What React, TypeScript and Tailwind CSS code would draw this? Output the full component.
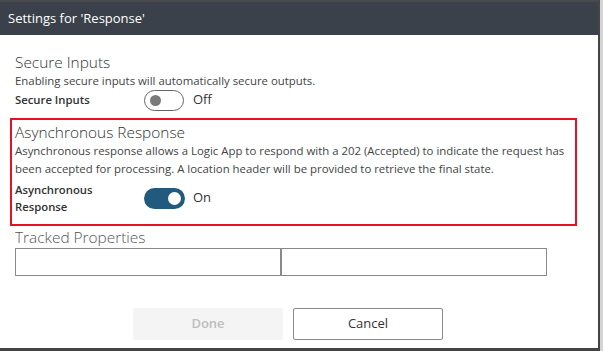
import { useState } from 'react';

function Toggle({ on, onChange }: { on: boolean; onChange: () => void }) {
  return (
    <button
      onClick={onChange}
      className={
        on
          ? 'w-[41px] h-[21px] rounded-full bg-[#215a7c] flex items-center justify-end pr-[4px]'
          : 'w-[40px] h-[21px] rounded-full border border-[#666] bg-white flex items-center justify-start pl-[5px]'
      }
    >
      <span className={on ? 'w-[13px] h-[13px] rounded-full bg-white' : 'w-[11px] h-[11px] rounded-full bg-[#7a7a7a]'} />
    </button>
  );
}

export default function App() {
  const [secure, setSecure] = useState(false);
  const [async, setAsync] = useState(true);

  return (
    <div className="w-[603px] h-[351px] flex bg-white text-[#333]" style={{ fontFamily: '"Open Sans", "Noto Sans", sans-serif' }}>
      <div className="w-[600px] h-full flex flex-col border-t-2 border-t-[#4a4a4a] border-r-2 border-r-[#444] border-b-[3px] border-b-[#444]">
        <div className="h-[33px] bg-[#3a414a] text-white text-[13px] pl-[8px] flex items-center">Settings for 'Response'</div>

        <div className="pl-[15px] pt-[18px]">
          <h2 className="text-[15.4px] leading-[20px] font-light">Secure Inputs</h2>
          <p className="text-[11.4px] leading-[16px] text-[#444]">Enabling secure inputs will automatically secure outputs.</p>
          <div className="flex items-center h-[22px]">
            <span className="w-[129px] text-[11.3px] font-semibold">Secure Inputs</span>
            <Toggle on={secure} onChange={() => setSecure(!secure)} />
            <span className="ml-[9px] text-[13px]">{secure ? 'On' : 'Off'}</span>
          </div>
        </div>

        <div className="ml-[10px] mt-[7px] w-[567px] h-[108px] border-2 border-[#e81123] pl-[3px] pt-[4px]">
          <h2 className="text-[15.4px] leading-[18px] font-light">Asynchronous Response</h2>
          <p className="text-[11.4px] leading-[18px] text-[#444]">
            Asynchronous response allows a Logic App to respond with a 202 (Accepted) to indicate the request has been accepted for processing. A location header will be provided to retrieve the final state.
          </p>
          <div className="flex items-center mt-[3px]">
            <span className="w-[129px] text-[11.3px] leading-[17px] font-semibold">
              Asynchronous
              <br />
              Response
            </span>
            <Toggle on={async} onChange={() => setAsync(!async)} />
            <span className="ml-[8px] text-[13px]">{async ? 'On' : 'Off'}</span>
          </div>
        </div>

        <div className="pl-[15px] pt-[2px]">
          <h2 className="text-[15.4px] leading-[20px] font-light text-[#555]">Tracked Properties</h2>
          <div className="flex">
            <input className="w-[266px] h-[28px] border border-[#8a8a8a] outline-none" />
            <input className="w-[266px] h-[28px] border border-[#8a8a8a] outline-none" />
          </div>
        </div>

        <div className="flex gap-[10px] pl-[133px] mt-[32px]">
          <button disabled className="w-[150px] h-[32px] bg-[#f4f4f4] text-[#bdbdbd] text-[13px] font-semibold rounded-[2px]">Done</button>
          <button className="w-[150px] h-[32px] border border-[#8a8a8a] text-[13px] rounded-[2px]">Cancel</button>
        </div>
      </div>
      <div className="w-[3px] h-full bg-[#d4d4d4]" />
    </div>
  );
}
